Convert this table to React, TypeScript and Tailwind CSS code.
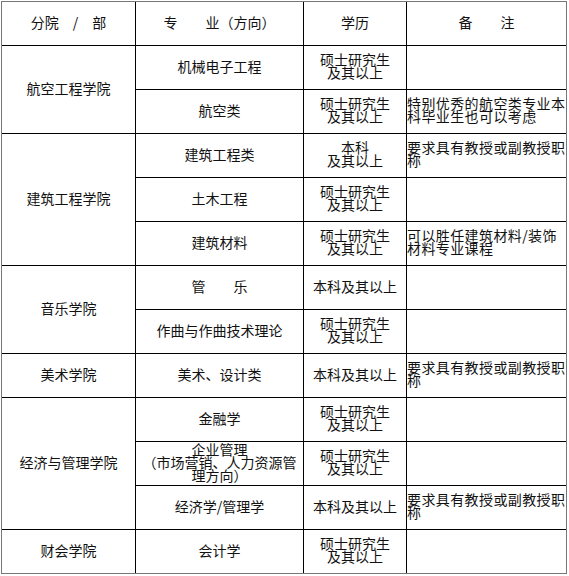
import React from 'react'

type Row = {
  major: React.ReactNode
  degree: React.ReactNode
  note?: string
}

const MASTER = (
  <>
    硕士研究生
    <br />
    及其以上
  </>
)

const groups: { school: string; rows: Row[] }[] = [
  {
    school: '航空工程学院',
    rows: [
      { major: '机械电子工程', degree: MASTER },
      { major: '航空类', degree: MASTER, note: '特别优秀的航空类专业本科毕业生也可以考虑' },
    ],
  },
  {
    school: '建筑工程学院',
    rows: [
      {
        major: '建筑工程类',
        degree: (
          <>
            本科
            <br />
            及其以上
          </>
        ),
        note: '要求具有教授或副教授职称',
      },
      { major: '土木工程', degree: MASTER },
      { major: '建筑材料', degree: MASTER, note: '可以胜任建筑材料/装饰材料专业课程' },
    ],
  },
  {
    school: '音乐学院',
    rows: [
      { major: <span className="whitespace-pre">管　　乐</span>, degree: '本科及其以上' },
      { major: '作曲与作曲技术理论', degree: MASTER },
    ],
  },
  {
    school: '美术学院',
    rows: [{ major: '美术、设计类', degree: '本科及其以上', note: '要求具有教授或副教授职称' }],
  },
  {
    school: '经济与管理学院',
    rows: [
      { major: '金融学', degree: MASTER },
      {
        major: (
          <>
            企业管理
            <br />
            （市场营销、人力资源管
            <br />
            理方向）
          </>
        ),
        degree: MASTER,
      },
      { major: '经济学/管理学', degree: '本科及其以上', note: '要求具有教授或副教授职称' },
    ],
  },
  {
    school: '财会学院',
    rows: [{ major: '会计学', degree: MASTER }],
  },
]

const spans: Record<number, string> = {
  1: 'row-span-1',
  2: 'row-span-2',
  3: 'row-span-3',
}

const center = 'bg-white flex items-center justify-center text-center pb-[3px]'

export default function App() {
  return (
    <div className="bg-white w-[569px] h-[576px] pl-px pt-px font-['Noto_Sans_CJK_SC',sans-serif] text-[14px] leading-[13px] text-[#111]">
      <div className="grid w-[566px] grid-cols-[133px_167px_102px_159px] grid-rows-[repeat(13,43px)] gap-px border border-[#777] bg-black">
        <div className={`${center} col-start-1 whitespace-pre`}>分院　/　部</div>
        <div className={`${center} col-start-2 whitespace-pre`}>专　　业（方向）</div>
        <div className={`${center} col-start-3`}>学历</div>
        <div className={`${center} col-start-4 whitespace-pre`}>备　　注</div>

        {groups.map((g) => (
          <React.Fragment key={g.school}>
            <div className={`${center} col-start-1 ${spans[g.rows.length]}`}>{g.school}</div>
            {g.rows.map((r, i) => (
              <React.Fragment key={i}>
                <div className={`${center} col-start-2`}>{r.major}</div>
                <div className={`${center} col-start-3`}>{r.degree}</div>
                <div className="col-start-4 flex items-center bg-white pb-[3px] tracking-[0.4px]">
                  {r.note && <p className="w-full">{r.note}</p>}
                </div>
              </React.Fragment>
            ))}
          </React.Fragment>
        ))}
      </div>
    </div>
  )
}
